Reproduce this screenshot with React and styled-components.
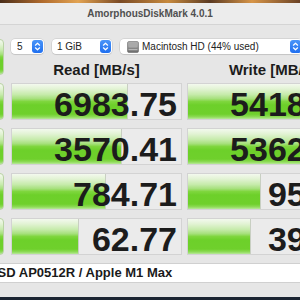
import React from "react";
import styled, { createGlobalStyle } from "styled-components";

const Global = createGlobalStyle`
  html, body { margin: 0; padding: 0; }
  body {
    width: 300px;
    height: 300px;
    overflow: hidden;
    background:
      linear-gradient(90deg, #4a2e1a 0%, #b06a2c 14%, #e2a352 26%, #7a4a24 40%, #c78a3e 56%, #5b3a22 70%, #d79548 84%, #6a4226 100%) top left / 100% 3px no-repeat,
      #1b2432;
    font-family: "Liberation Sans", Arial, sans-serif;
  }
  #root { width: 300px; height: 300px; }
`;

const GREEN = `linear-gradient(to bottom,
  #f3f9ee 0%, #e2f3d4 14%, #c6ebab 30%, #a6e07c 42%, #7fd63e 50%,
  #6dd02a 60%, #6fd02c 86%, #8edb58 94%, #b8e99a 100%)`;

const Window = styled.div`
  margin-top: 3px;
  width: 300px;
  height: 294px;
  background: #e6e6e6;
  overflow: hidden;
  display: flex;
  flex-direction: column;
`;

const TitleBar = styled.div`
  flex: none;
  height: 21px;
  line-height: 21px;
  text-align: center;
  font-size: 10px;
  font-weight: 700;
  color: #505050;
  background: #ececec;
  border-bottom: 1px solid #d4d4d4;
`;

const Board = styled.div`
  margin: 14px 0 0 -64px;
  display: grid;
  grid-template-columns: 70px 171px 171px;
  grid-template-rows: 15px 13px repeat(4, 37px) 20px;
  column-gap: 5px;
  row-gap: 8px;
  width: max-content;
`;

const SideButton = styled.div`
  grid-column: 1;
  grid-row: ${(p) => p.$row};
  justify-self: start;
  width: 68px;
  box-sizing: border-box;
  border: 1px solid #b9d3a4;
  border-radius: 4px;
  background: ${GREEN};
`;

const PopupRow = styled.div`
  grid-column: 2 / span 2;
  grid-row: 1;
  display: flex;
  gap: 8px;
`;

const Popup = styled.div`
  flex: none;
  width: ${(p) => p.$w}px;
  height: 15px;
  box-sizing: border-box;
  background: #ffffff;
  border-radius: 4px;
  box-shadow: 0 0 0 0.5px rgba(0, 0, 0, 0.14), 0 1px 1px rgba(0, 0, 0, 0.08);
  display: flex;
  align-items: center;
  padding: 0 1px 0 ${(p) => p.$pl}px;
  font-size: 10px;
  color: #232323;
  white-space: nowrap;
`;

const PopupLabel = styled.span`
  flex: 1;
  display: flex;
  align-items: center;
  gap: 3px;
  overflow: hidden;
`;

const Header = styled.div`
  grid-column: ${(p) => p.$col};
  grid-row: 2;
  text-align: center;
  font-size: 15px;
  line-height: 15px;
  font-weight: 700;
  color: #1c1c1c;
  white-space: nowrap;
`;

const Cell = styled.div`
  grid-column: ${(p) => p.$col};
  grid-row: ${(p) => p.$row};
  display: grid;
  grid-template-rows: minmax(0, 1fr);
  grid-template-columns: minmax(0, 1fr);
  box-sizing: border-box;
  border: 1px solid #d3d3d3;
  background: #ebebeb;
  overflow: hidden;
`;

const Fill = styled.div`
  grid-area: 1 / 1;
  justify-self: start;
  width: ${(p) => p.$pct}%;
  box-sizing: border-box;
  border-right: 1px solid #c8cfc2;
  background: ${GREEN};
`;

const Value = styled.div`
  grid-area: 1 / 1;
  justify-self: end;
  padding: 6px 4px 0 0;
  font-size: 34px;
  line-height: 29px;
  font-weight: 700;
  color: #1c1c1c;
  white-space: nowrap;
`;

const Comment = styled.div`
  grid-column: 1 / -1;
  grid-row: 7;
  box-sizing: border-box;
  background: #ffffff;
  border: 1px solid #d0d0d0;
  padding-left: 5px;
  font-size: 13px;
  line-height: 18px;
  font-weight: 700;
  color: #1a1a1a;
  white-space: nowrap;
`;

const Stepper = () => (
  <svg width="11" height="13" viewBox="0 0 11 13">
    <defs>
      <linearGradient id="stg" x1="0" y1="0" x2="0" y2="1">
        <stop offset="0" stopColor="#4a95f8" />
        <stop offset="1" stopColor="#1f6ff0" />
      </linearGradient>
    </defs>
    <rect x="0" y="0" width="11" height="13" rx="3" fill="url(#stg)" />
    <path d="M3.4 5.2 L5.5 3.2 L7.6 5.2" fill="none" stroke="#fff" strokeWidth="1.2" strokeLinecap="round" strokeLinejoin="round" />
    <path d="M3.4 7.8 L5.5 9.8 L7.6 7.8" fill="none" stroke="#fff" strokeWidth="1.2" strokeLinecap="round" strokeLinejoin="round" />
  </svg>
);

const DiskIcon = () => (
  <svg width="12" height="12" viewBox="0 0 12 12">
    <defs>
      <linearGradient id="dkg" x1="0" y1="0" x2="0" y2="1">
        <stop offset="0" stopColor="#b4b4b4" />
        <stop offset="0.55" stopColor="#8c8c8c" />
        <stop offset="1" stopColor="#6a6a6a" />
      </linearGradient>
    </defs>
    <rect x="0.5" y="0.5" width="11" height="11" rx="1.5" fill="url(#dkg)" stroke="#6b6b6b" strokeWidth="0.6" />
    <rect x="1.5" y="1.5" width="9" height="5" rx="0.8" fill="#a9a9a9" />
    <rect x="1.5" y="8.2" width="9" height="1" fill="#c4c4c4" />
  </svg>
);

const rows = [
  { read: "6983.75", rp: 68.6, write: "5418.62", wp: 67.6 },
  { read: "3570.41", rp: 65, write: "5362.19", wp: 67.3 },
  { read: "784.71", rp: 55.6, write: "95.47", wp: 43.2 },
  { read: "62.77", rp: 39.6, write: "39.84", wp: 37.3 },
];

export default function App() {
  return (
    <>
      <Global />
      <Window>
        <TitleBar>AmorphousDiskMark 4.0.1</TitleBar>
        <Board>
          <SideButton $row="1 / span 2" />
          <PopupRow>
            <Popup $w={33} $pl={6}>
              <PopupLabel>5</PopupLabel>
              <Stepper />
            </Popup>
            <Popup $w={60} $pl={5}>
              <PopupLabel>1 GiB</PopupLabel>
              <Stepper />
            </Popup>
            <Popup $w={182} $pl={7}>
              <PopupLabel>
                <DiskIcon />
                Macintosh HD (44% used)
              </PopupLabel>
              <Stepper />
            </Popup>
          </PopupRow>
          <Header $col={2}>Read [MB/s]</Header>
          <Header $col={3}>Write [MB/s]</Header>
          {rows.map((r, i) => (
            <React.Fragment key={i}>
              <SideButton $row={i + 3} />
              <Cell $col={2} $row={i + 3}>
                <Fill $pct={r.rp} />
                <Value>{r.read}</Value>
              </Cell>
              <Cell $col={3} $row={i + 3}>
                <Fill $pct={r.wp} />
                <Value>{r.write}</Value>
              </Cell>
            </React.Fragment>
          ))}
          <Comment>APPLE SSD AP0512R / Apple M1 Max</Comment>
        </Board>
      </Window>
    </>
  );
}
